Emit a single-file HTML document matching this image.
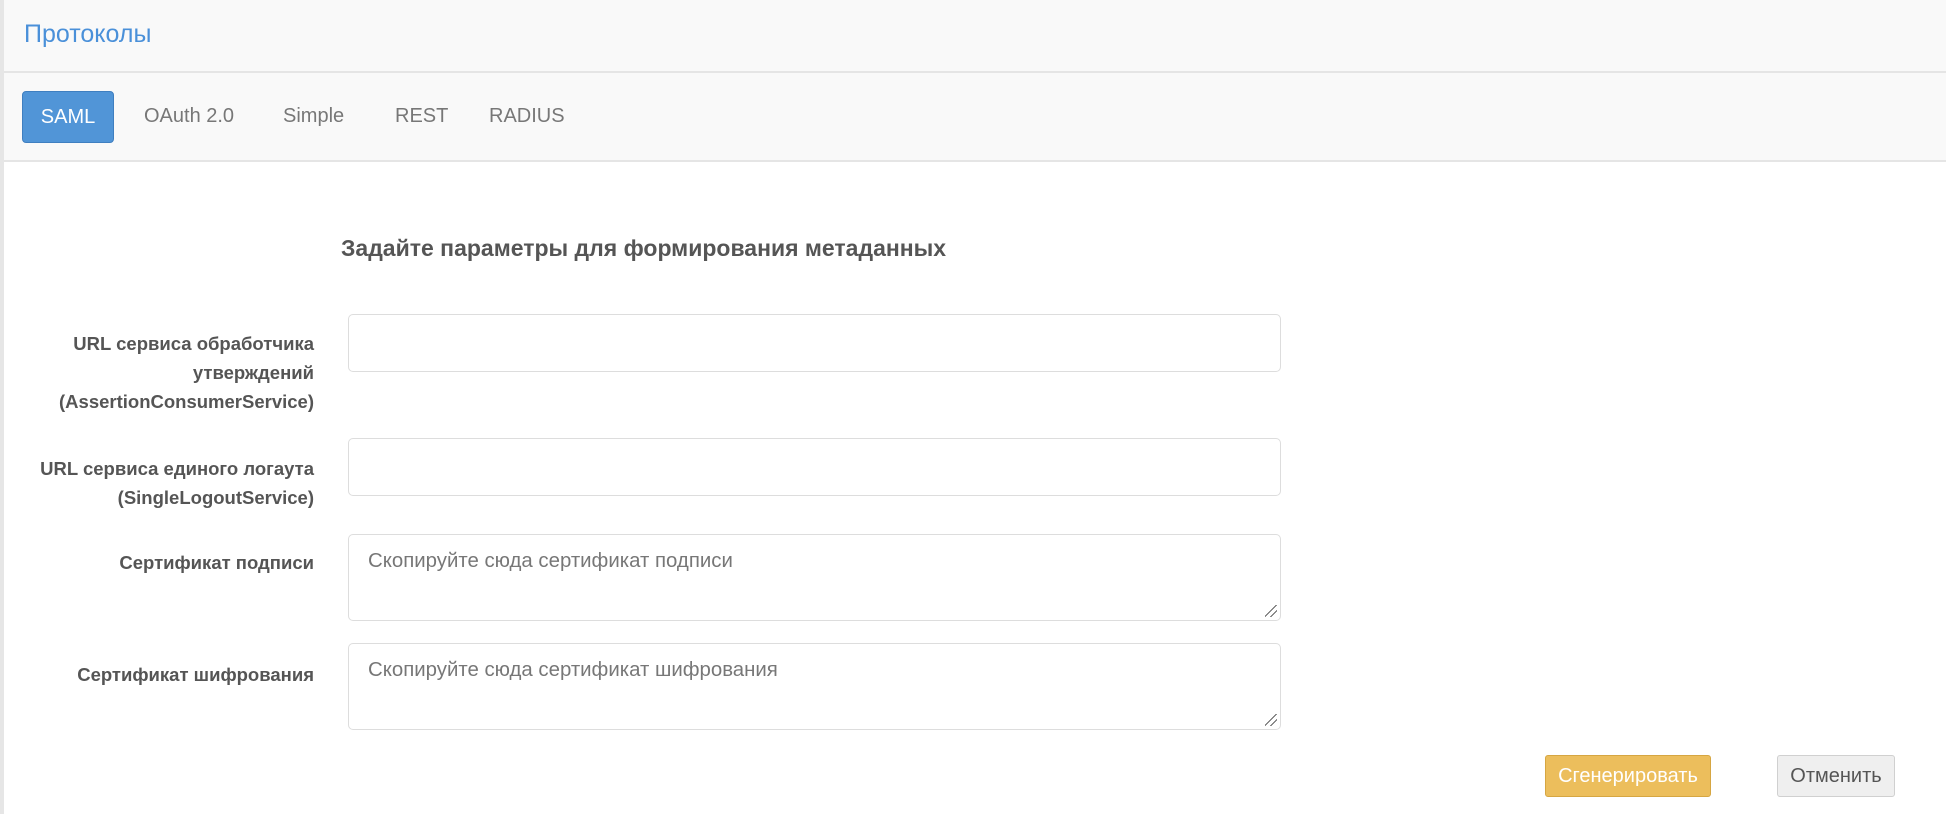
<!DOCTYPE html>
<html><head><meta charset="utf-8"><style>
*{box-sizing:border-box;margin:0;padding:0}
body{width:1946px;height:814px;overflow:hidden;background:#fff;font-family:"Liberation Sans",sans-serif;color:#555;position:relative}
.lb{position:absolute;left:0;top:0;width:4px;height:814px;background:#e6e6e6}
.hdr{position:absolute;left:4px;top:0;right:0;height:73px;background:#f9f9f9;border-bottom:2px solid #e5e5e5}
.hdr span{position:absolute;left:20px;top:20px;font-size:25px;color:#4a90d9}
.tabs{position:absolute;left:4px;top:73px;right:0;height:89px;background:#f9f9f9;border-bottom:2px solid #e5e5e5}
.tab{position:absolute;top:32px;font-size:20px;color:#777}
.saml{position:absolute;left:18px;top:18px;width:92px;height:52px;background:#5195d7;border:1px solid #3f7fc0;border-radius:4px;color:#fff;font-size:20px;text-align:center;line-height:50px}
h2{position:absolute;left:341px;top:235px;font-size:23px;font-weight:bold;color:#555}
.lab{position:absolute;right:1632px;text-align:right;font-size:18.5px;font-weight:bold;line-height:29px;color:#555;white-space:nowrap}
.inp{position:absolute;left:348px;width:933px;border:1px solid #ddd;border-radius:5px;background:#fff}
.ph{position:absolute;left:19px;top:15px;font-size:20.4px;color:#777}
.grip{position:absolute;right:3px;bottom:3px;width:12px;height:12px;background:linear-gradient(135deg,transparent 45%,#666 45%,#666 52%,transparent 52%,transparent 70%,#666 70%,#666 77%,transparent 77%)}
.btn{position:absolute;top:755px;height:42px;border-radius:3px;font-size:20px;text-align:center;line-height:40px;white-space:nowrap}
</style></head><body>
<div class="lb"></div>
<div class="hdr"><span>Протоколы</span></div>
<div class="tabs">
<div class="saml">SAML</div>
<span class="tab" style="left:140px">OAuth 2.0</span>
<span class="tab" style="left:279px">Simple</span>
<span class="tab" style="left:391px">REST</span>
<span class="tab" style="left:485px">RADIUS</span>
</div>
<h2>Задайте параметры для формирования метаданных</h2>
<div class="lab" style="top:329px">URL сервиса обработчика<br>утверждений<br>(AssertionConsumerService)</div>
<div class="inp" style="top:314px;height:58px"></div>
<div class="lab" style="top:454px">URL сервиса единого логаута<br>(SingleLogoutService)</div>
<div class="inp" style="top:438px;height:58px"></div>
<div class="lab" style="top:548px">Сертификат подписи</div>
<div class="inp" style="top:534px;height:87px"><span class="ph">Скопируйте сюда сертификат подписи</span><div class="grip"></div></div>
<div class="lab" style="top:660px">Сертификат шифрования</div>
<div class="inp" style="top:643px;height:87px"><span class="ph">Скопируйте сюда сертификат шифрования</span><div class="grip"></div></div>
<div class="btn" style="left:1545px;width:166px;background:#ecbe5c;border:1px solid #d6a642;color:#fff">Сгенерировать</div>
<div class="btn" style="left:1777px;width:118px;background:#efefef;border:1px solid #d0d0d0;color:#555">Отменить</div>
</body></html>
